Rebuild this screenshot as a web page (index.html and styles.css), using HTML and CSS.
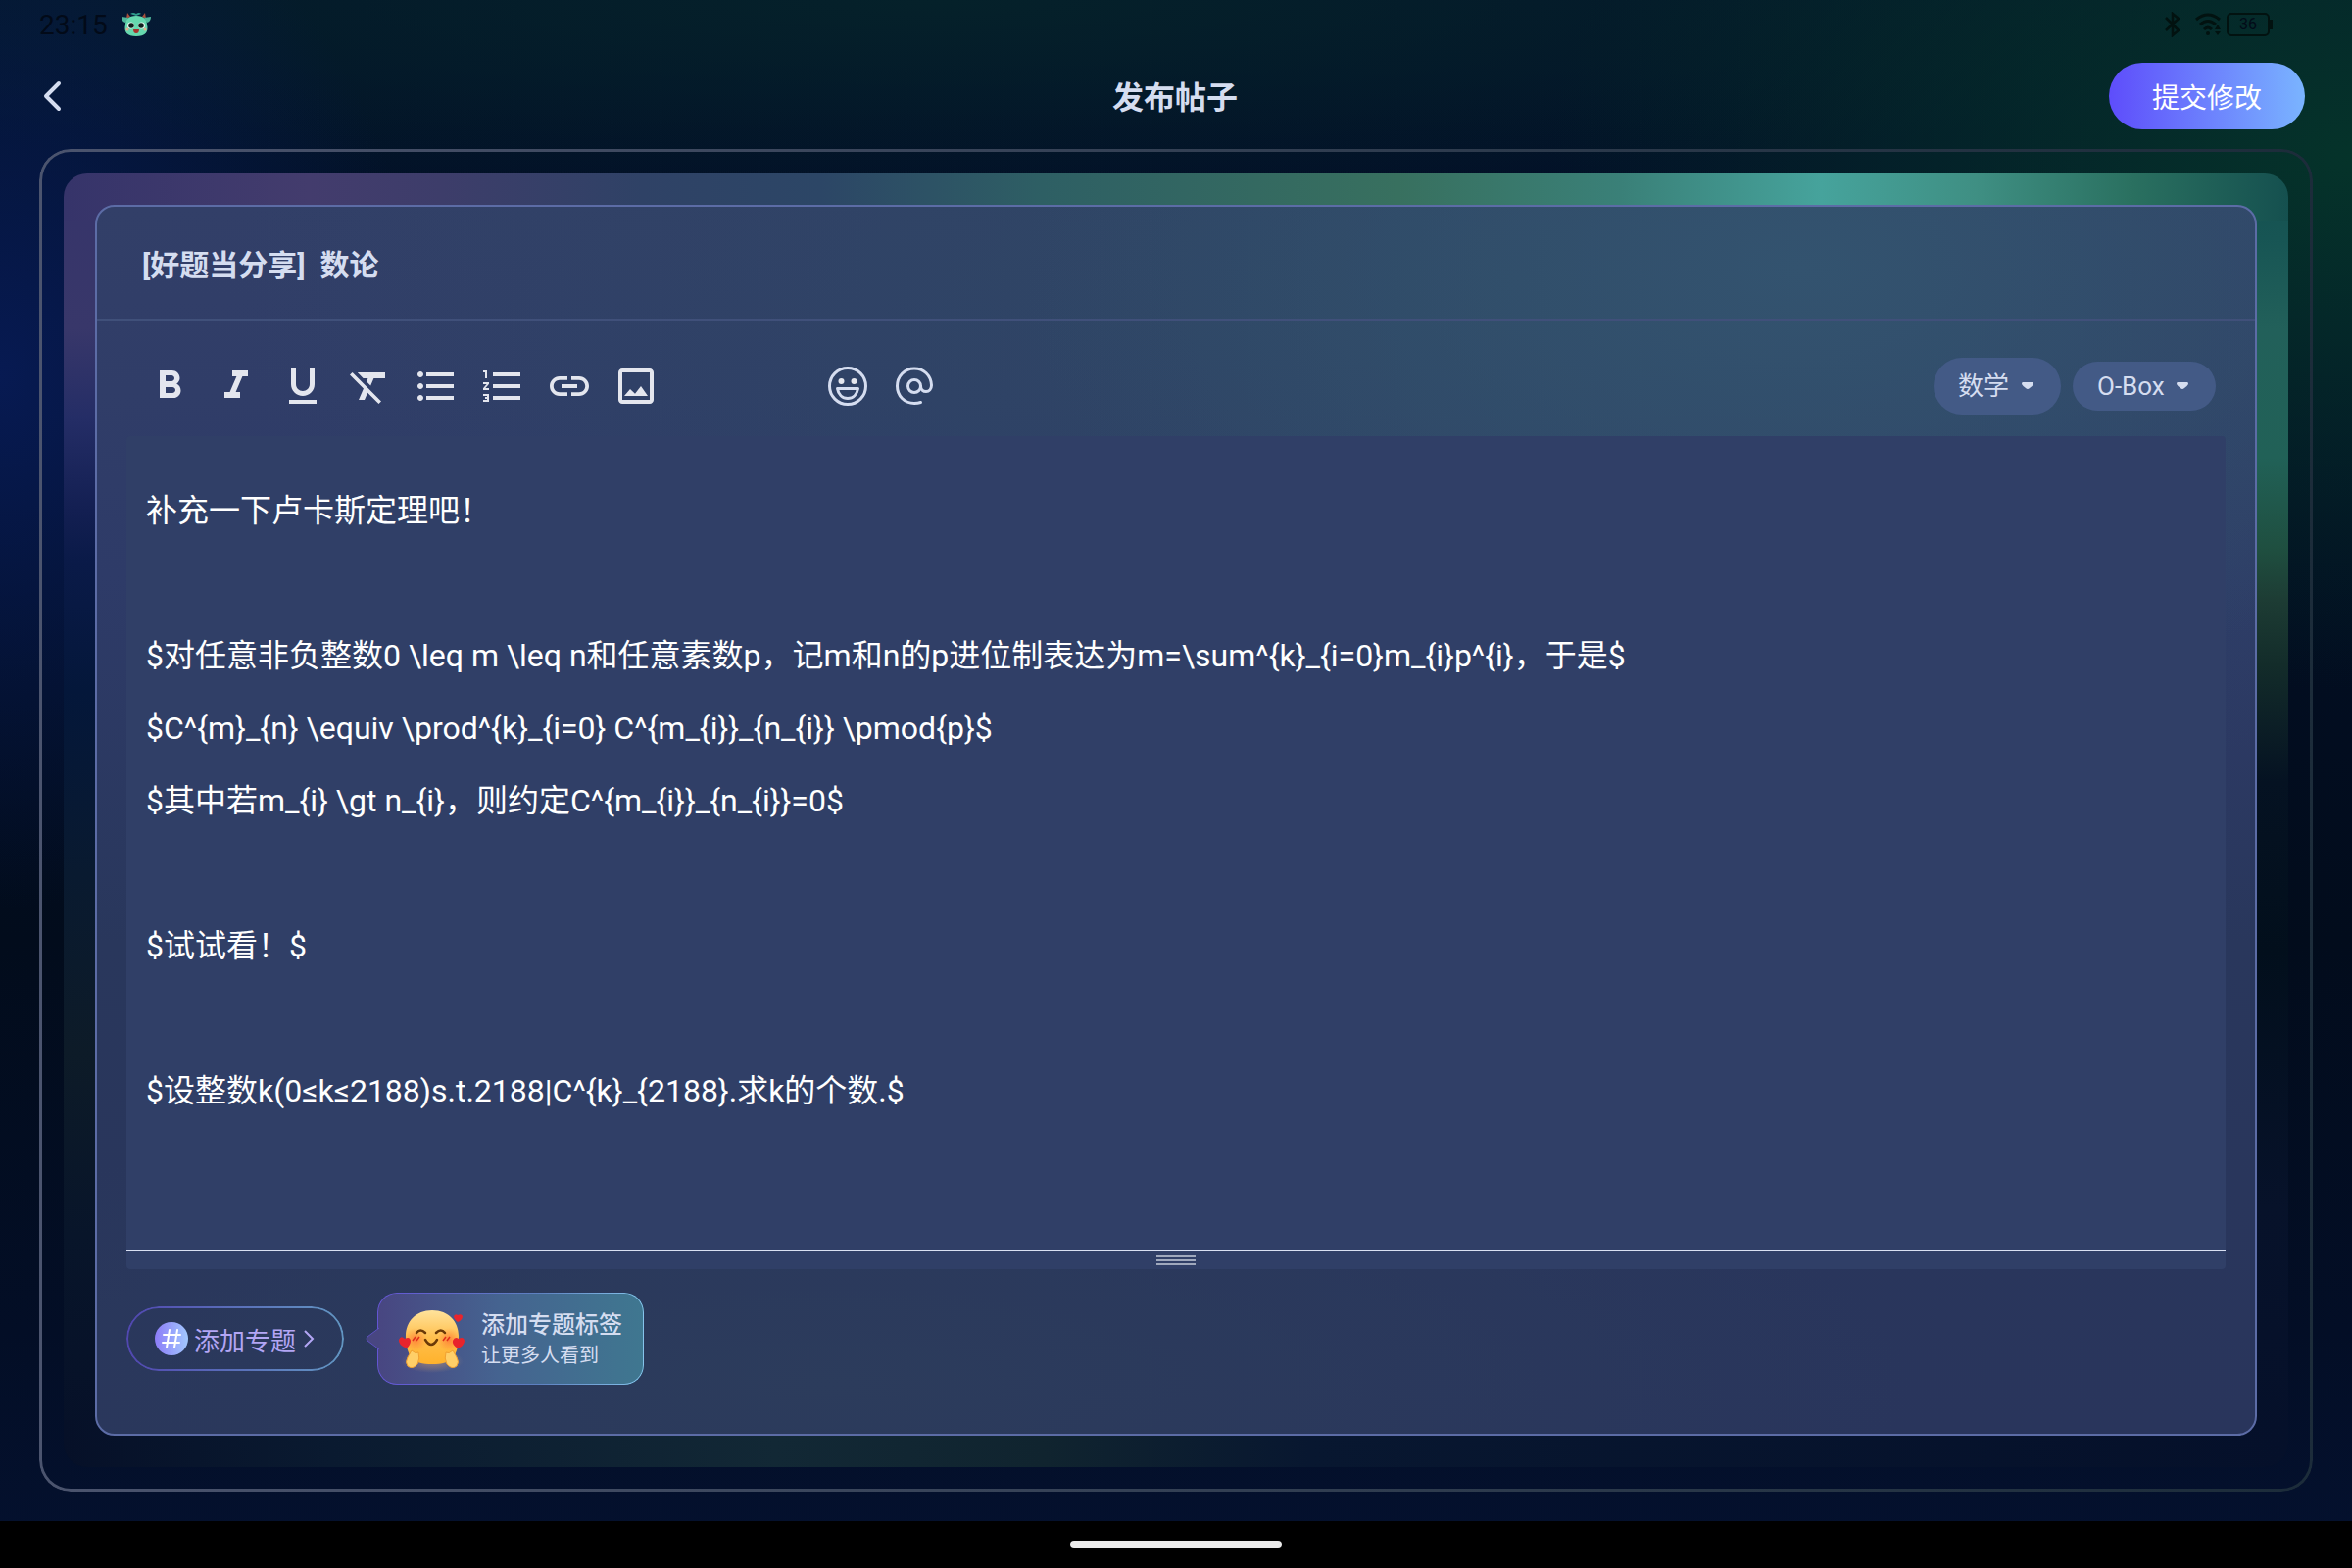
FILE: index.html
```html
<!DOCTYPE html>
<html lang="zh-CN">
  <head>
    <meta charset="UTF-8" />
    <meta name="viewport" content="width=device-width, initial-scale=1.0" />
    <title>发布帖子</title>
    <link rel="stylesheet" href="styles.css">
  </head>

  <body>
    <div class="status">
      <span class="time">23:15</span>
      <svg class="monster" width="30" height="26" viewBox="0 0 30 26">
        <path d="M9 2q3-2 6 0 3-2 5 0l-5 2z" fill="#2f9c8c" />
        <path d="M5 7l1-6 3 4zM25 7l-1-6-3 4z" fill="#a8503c" />
        <path d="M0 5l7 1-3 5q-4-1-4-6zM30 5l-7 1 3 5q4-1 4-6z" fill="#4fb79b" />
        <path d="M15 4c8 0 11 4 11 9 2 8-2 12-11 12S2 21 4 13c0-5 3-9 11-9z" fill="#66d8ae" />
        <circle cx="9.500" cy="14" r="3.500" fill="#e8f6f0" />
        <circle cx="20.500" cy="14" r="3.500" fill="#e8f6f0" />
        <circle cx="10" cy="14" r="2.800" fill="#10201c" />
        <circle cx="20" cy="14" r="2.800" fill="#10201c" />
        <circle cx="6" cy="18" r="1.500" fill="#e8b08c" />
        <circle cx="24" cy="18" r="1.500" fill="#e8b08c" />
        <path d="M12 18h6q0 4-3 4t-3-4z" fill="#a8322c" />
      </svg>
      <div class="system">
        <svg width="18" height="26" viewBox="0 0 18 26" fill="none" stroke="#021210" stroke-width="2.5">
          <path d="M2 6l13 13-6 5V2l6 5L2 19" />
        </svg>
        <svg width="28" height="26" viewBox="0 0 28 26" fill="none" stroke="#021210" stroke-width="3">
          <path d="M1 8q12-10 24 0M5 13q8-7 16 0M9 18q4-4 8 0" />
          <circle cx="13" cy="22" r="2" fill="#021210" stroke="none" />
          <path d="M20 18l3-5 3 5zM20 20l3 4 3-4z" fill="#021210" stroke="none" />
        </svg>
        <span class="battery">36</span>
      </div>
    </div>

    <header>
      <button class="back" aria-label="返回">
        <svg width="24" height="36" viewBox="0 0 24 36" fill="none" stroke="#d5ddf0" stroke-width="4" stroke-linecap="round" stroke-linejoin="round">
          <path d="M18 5L5 18l13 13" />
        </svg>
      </button>
      <h1>发布帖子</h1>
      <button class="submit">提交修改</button>
    </header>

    <main class="frame">
      <div class="glow">
        <section class="card">
          <input class="title" type="text" aria-label="标题" value="[好题当分享]&nbsp; 数论" />

          <div class="toolbar">
            <button aria-label="粗体">
              <svg viewBox="0 0 24 24"><path d="M15.6 10.79c.97-.67 1.65-1.77 1.65-2.79 0-2.26-1.75-4-4-4H7v14h7.04c2.09 0 3.71-1.7 3.71-3.79 0-1.52-.86-2.82-2.15-3.42zM10 6.5h3c.83 0 1.5.67 1.5 1.5s-.67 1.5-1.5 1.5h-3v-3zm3.5 9H10v-3h3.5c.83 0 1.5.67 1.5 1.5s-.67 1.5-1.5 1.5z" /></svg>
            </button>
            <button aria-label="斜体">
              <svg viewBox="0 0 24 24"><path d="M10 4v3h2.21l-3.42 8H6v3h8v-3h-2.21l3.42-8H18V4z" /></svg>
            </button>
            <button aria-label="下划线">
              <svg viewBox="0 0 24 24"><path d="M12 17c3.31 0 6-2.69 6-6V3h-2.5v8c0 1.93-1.57 3.5-3.5 3.5S8.500 12.930 8.500 11V3H6v8c0 3.310 2.690 6 6 6zm-7 2v2h14v-2H5z" /></svg>
            </button>
            <button aria-label="清除格式">
              <svg viewBox="0 0 24 24"><path d="M3.270 5L2 6.270l6.970 6.970L6.500 19h3l1.570-3.660L16.730 21 18 19.730 3.550 5.270 3.270 5zM6 5v.18L8.820 8h2.400l-.72 1.680 2.100 2.100L14.210 8H20V5H6z" /></svg>
            </button>
            <button aria-label="无序列表">
              <svg viewBox="0 0 24 24"><path d="M4 10.500c-.83 0-1.500.67-1.500 1.500s.67 1.500 1.500 1.500 1.500-.67 1.500-1.500-.67-1.500-1.500-1.500zm0-6c-.83 0-1.500.67-1.500 1.500S3.170 7.500 4 7.500 5.500 6.830 5.500 6 4.830 4.500 4 4.500zm0 12c-.83 0-1.500.68-1.500 1.500s.68 1.500 1.500 1.500 1.500-.68 1.500-1.500-.67-1.500-1.500-1.500zM7 19h14v-2H7v2zm0-6h14v-2H7v2zm0-8v2h14V5H7z" /></svg>
            </button>
            <button aria-label="有序列表">
              <svg viewBox="0 0 24 24"><path d="M2 17h2v.5H3v1h1v.5H2v1h3v-4H2v1zm1-9h1V4H2v1h1v3zm-1 3h1.800L2 13.100v.9h3v-1H3.200L5 10.900V10H2v1zm5-6v2h14V5H7zm0 14h14v-2H7v2zm0-6h14v-2H7v2z" /></svg>
            </button>
            <button aria-label="链接">
              <svg viewBox="0 0 24 24"><path d="M3.900 12c0-1.710 1.390-3.100 3.100-3.100h4V7H7c-2.760 0-5 2.240-5 5s2.240 5 5 5h4v-1.900H7c-1.710 0-3.100-1.390-3.100-3.100zM8 13h8v-2H8v2zm9-6h-4v1.900h4c1.710 0 3.100 1.390 3.100 3.100s-1.390 3.100-3.100 3.100h-4V17h4c2.760 0 5-2.240 5-5s-2.240-5-5-5z" /></svg>
            </button>
            <button aria-label="图片">
              <svg viewBox="0 0 24 24"><path d="M19 5v14H5V5h14m0-2H5c-1.100 0-2 .9-2 2v14c0 1.100.9 2 2 2h14c1.100 0 2-.9 2-2V5c0-1.100-.9-2-2-2zm-4.500 9l-3 3.900L9 13.500 6 17h12z" /></svg>
            </button>
            <button class="emoji" aria-label="表情">
              <svg viewBox="0 0 48 48">
                <g fill="none" stroke="#d5ddf0" stroke-width="3" stroke-linejoin="round">
                  <circle cx="24" cy="24" r="18.500" />
                  <path d="M13.500 26.500h21c-1 6-5 10-10.500 10s-9.500-4-10.500-10z" />
                </g>
                <circle cx="17.500" cy="19" r="3" />
                <circle cx="30.500" cy="19" r="3" />
              </svg>
            </button>
            <button aria-label="提及">
              <svg viewBox="0 0 48 48">
                <g fill="none" stroke="#d5ddf0" stroke-width="3" stroke-linecap="round">
                  <circle cx="24" cy="24" r="6.500" />
                  <path d="M30.500 24c0 3.500 2.500 5.500 5.500 5.500s5.500-2.500 5.500-6.500c-.5-10-8-17-17.500-17C14 6 6.500 14 6.500 24S14 41.500 24 41.500c2.500 0 4.500-.3 6.500-1" />
                </g>
              </svg>
            </button>

            <label class="pill">
              <select aria-label="学科"><option>数学</option></select>
              <svg width="12" height="8" viewBox="0 0 12 8"><path d="M1 0h10q1 0 1 2-1 2-4 4-2 2-4 0-3-2-4-4 0-2 1-2z" /></svg>
            </label>
            <label class="pill small">
              <select aria-label="板块"><option>O-Box</option></select>
              <svg width="12" height="8" viewBox="0 0 12 8"><path d="M1 0h10q1 0 1 2-1 2-4 4-2 2-4 0-3-2-4-4 0-2 1-2z" /></svg>
            </label>
          </div>

          <div class="editor">
            <textarea aria-label="正文" spellcheck="false">补充一下卢卡斯定理吧！

$对任意非负整数0 \leq m \leq n和任意素数p，记m和n的p进位制表达为m=\sum^{k}_{i=0}m_{i}p^{i}，于是$
$C^{m}_{n} \equiv \prod^{k}_{i=0} C^{m_{i}}_{n_{i}} \pmod{p}$
$其中若m_{i} \gt n_{i}，则约定C^{m_{i}}_{n_{i}}=0$

$试试看！$

$设整数k(0≤k≤2188)s.t.2188|C^{k}_{2188}.求k的个数.$</textarea>
            <div class="resize"><span></span></div>
          </div>

          <footer>
            <button class="topic ring">
              <svg width="34" height="34" viewBox="0 0 34 34">
                <defs>
                  <linearGradient id="hash"><stop stop-color="#8c7cf8" /><stop offset="1" stop-color="#a2c8ff" /></linearGradient>
                </defs>
                <circle cx="17" cy="17" r="17" fill="url(#hash)" />
                <path d="M15 8l-3 18M23 8l-3 18M9 13h17M8 21h17" fill="none" stroke="#fff" stroke-width="2" stroke-linecap="round" />
              </svg>
              <span>添加专题</span>
              <svg width="16" height="20" viewBox="0 0 16 20" fill="none" stroke="#b3a6f5" stroke-width="2"><path d="M3 2l8 8-8 8" /></svg>
            </button>

            <div class="bubble ring">
              <svg class="tail" width="15" height="24" viewBox="0 0 15 24">
                <path d="M15 1L3 10q-2 2 0 4l12 9" fill="#484681" stroke="#5d50c0" />
              </svg>
              <svg width="70" height="70" viewBox="0 0 70 70">
                <defs>
                  <linearGradient id="face" x2="0" y2="1"><stop stop-color="#ffe39c" /><stop offset=".5" stop-color="#ffc04e" /><stop offset="1" stop-color="#ffb22c" /></linearGradient>
                  <radialGradient id="halo"><stop stop-color="#f0b070" stop-opacity=".5" /><stop offset="1" stop-color="#f0b070" stop-opacity="0" /></radialGradient>
                  <radialGradient id="cheek"><stop stop-color="#ff5a30" stop-opacity=".6" /><stop offset="1" stop-color="#ff7a30" stop-opacity="0" /></radialGradient>
                </defs>
                <ellipse cx="35" cy="58" rx="32" ry="12" fill="url(#halo)" />
                <path d="M35 6c17 0 27 12 27 26 0 10-2 17-6 23-5 8-37 8-42 0-4-6-6-13-6-23C8 18 18 6 35 6z" fill="url(#face)" />
                <circle cx="18" cy="36" r="12" fill="url(#cheek)" />
                <circle cx="52" cy="36" r="12" fill="url(#cheek)" />
                <path d="M19 29q4-5 9 0M39 29q5-5 9 0M28 36q6 10 12 0" fill="none" stroke="#6b3a08" stroke-width="2.500" stroke-linecap="round" />
                <path d="M15 37l3-4M19 37l3-4M46 37l3-4M50 37l3-4" stroke="#e0301c" stroke-width="1.500" />
                <path d="M14 47q4 4 7 2 2 6-1 12-5 6-10 2-3-4 0-9zM56 47q-4 4-7 2-2 6 1 12 5 6 10 2 3-4 0-9z" fill="#ffcf68" stroke="#f0a030" />
                <path d="M9 45q-9-4-8-9 2-5 6-1 5-3 6 2 0 4-4 8zM61 45q-6-4-5-8 2-5 6-2 5-3 6 2 0 5-7 8zM61 18q-4-3-4-6 2-3 4-1 4-2 5 1 0 4-5 6z" fill="#e8242c" />
              </svg>
              <div class="tip">
                <strong>添加专题标签</strong>
                <span>让更多人看到</span>
              </div>
            </div>
          </footer>
        </section>
      </div>
    </main>

    <div class="home"><span></span></div>
  </body>
</html>
```

FILE: styles.css
```css
* {
  box-sizing: border-box;
}
body {
  margin: 0;
  min-height: 100vh;
  display: flex;
  flex-direction: column;
  font-family: Roboto, "Noto Sans CJK SC", sans-serif;
  color: #d5ddf0;
  background:
    radial-gradient(ellipse 18% 34% at 0 24%, #071a52, transparent),
    radial-gradient(ellipse 34% 34% at 100% 10%, #05332a, transparent),
    radial-gradient(ellipse 60% 12% at 40% 0, #05212a, transparent),
    linear-gradient(#03152a, #020f26 20%, #020c1c 60%, #030e26 85%, #04112f);
}
button,
input,
select,
textarea {
  font-family: inherit;
  color: inherit;
  background: none;
  border: 0;
  padding: 0;
  outline: none;
}
button {
  cursor: pointer;
}

/* statusbar */
.status {
  height: 48px;
  padding: 2px 84px 0 40px;
  display: flex;
  align-items: center;
  gap: 14px;
  color: #020a18;
}
.time {
  font-size: 28px;
}
.system {
  margin-left: auto;
  display: flex;
  align-items: center;
  gap: 4px;
}
.system svg:first-child {
  margin-right: 10px;
}
.battery {
  position: relative;
  width: 44px;
  height: 24px;
  border: 2px solid #021210;
  border-radius: 5px;
  font-size: 16px;
  line-height: 20px;
  text-align: center;
}
.battery::after {
  content: "";
  position: absolute;
  top: 5px;
  right: -5px;
  width: 3px;
  height: 10px;
  background: #021210;
}

header {
  height: 100px;
  padding: 0 48px 0 42px;
  display: grid;
  grid-template-columns: 1fr auto 1fr;
  align-items: center;
  margin-bottom: 4px;
}
.back {
  justify-self: start;
  height: 36px;
}
header h1 {
  margin: 0 -4px 2px 0;
  font-size: 32px;
  font-weight: 700;
}
.submit {
  justify-self: end;
  width: 200px;
  height: 68px;
  border-radius: 34px;
  background: linear-gradient(to right, #5e4dfb, #7ab4ff);
  color: #fff;
  font-size: 28px;
}

/* gradient outline, drawn as a masked layer */
.ring {
  position: relative;
}
.frame::before,
.ring::before {
  content: "";
  position: absolute;
  inset: 0;
  padding: 2px;
  border-radius: inherit;
  background: linear-gradient(to right, #5147b0, #6296c2);
  mask: linear-gradient(#000 0 0) content-box exclude, linear-gradient(#000 0 0);
  pointer-events: none;
}
.frame {
  position: relative;
  flex: 1;
  display: flex;
  margin: 0 40px 30px;
  padding: 25px;
  border-radius: 32px;
}
.frame::before {
  padding: 3px;
  background: linear-gradient(to right, #4b546e, #1c2c3a);
}

/* only the edges show round the card, each one has its own light */
.glow {
  flex: 1;
  display: flex;
  padding: 32px;
  border-radius: 24px;
  background:
    linear-gradient(to right, #36346a, #433c6d 11%, #3d3d6a 17%, #2f4266 26%, #2c4666 34%, #2e5f64 44%, #38705f 60%, #3a8078 70%, #46a39c 79%, #3f8f83 86%, #2a7060 93%, #15504f) top / 100% 48px no-repeat,
    linear-gradient(to right, #061028, #0a1a30 12%, #122835 32%, #10242f 44%, #081730 56%, #05102a) bottom / 100% 48px no-repeat,
    linear-gradient(#36346a, #38376a 12%, #242d66 19%, #131f52 26%, #0a1a48 30%, #04173a 40%, #091a30 54%, #0d1b28 68%, #08152a 82%, #061028) left / 48px 100% no-repeat,
    linear-gradient(#15504f, #175554 5%, #22605a 12%, #216157 22%, #1f4f40 29%, #1d3c34 33%, #132c2a 38%, #051222 47%, #020f1c 60%, #07122a 80%, #05102a) right / 48px 100% no-repeat;
}
.card {
  flex: 1;
  display: flex;
  flex-direction: column;
  border: 2px solid #5c6ca6;
  border-radius: 20px;
  background:
    radial-gradient(ellipse 36% 36% at 79% 5%, #33536f, transparent),
    radial-gradient(ellipse 60% 46% at 66% 6%, #2e4864, transparent),
    radial-gradient(ellipse 50% 24% at 34% 96%, #2c3c5c, transparent),
    linear-gradient(#323f68, #2e3b68 30%, #29375c 60%, #29355c);
}

.title {
  height: 117px;
  padding: 0 46px 2px;
  border-bottom: 2px solid #40507a;
  font-size: 30px;
  font-weight: 700;
}

.toolbar {
  height: 117px;
  padding: 14px 40px 0;
  display: flex;
  align-items: center;
}
.toolbar button {
  width: 68px;
  height: 48px;
}
.toolbar button svg {
  width: 48px;
  height: 48px;
  fill: #e4e6ee;
}
.toolbar .emoji {
  margin-left: 148px;
}
.pill {
  height: 58px;
  padding: 0 28px 0 25px;
  margin-left: auto;
  display: flex;
  align-items: center;
  gap: 12px;
  border-radius: 29px;
  background: #435a86;
}
.pill.small {
  height: 50px;
  margin-left: 12px;
}
.pill select {
  appearance: none;
  font-size: 26px;
}
.pill svg {
  fill: #d5ddf0;
}

.editor {
  flex: 1;
  display: flex;
  flex-direction: column;
  margin: 0 30px;
  border-radius: 4px;
  background: #303f67;
}
.editor textarea {
  flex: 1;
  padding: 39px 20px 0;
  resize: none;
  border-bottom: 2px solid #d9e0f2;
  color: #fff;
  font-size: 32px;
  line-height: 74px;
}
.resize {
  height: 18px;
  display: flex;
  justify-content: center;
  padding-top: 4px;
}
.resize span {
  width: 40px;
  height: 10px;
  background: repeating-linear-gradient(#a0a9bd 0 2px, transparent 2px 4px);
}

footer {
  height: 168px;
  padding: 24px 30px 0;
  display: flex;
  align-items: flex-start;
  gap: 34px;
}
.topic {
  width: 222px;
  height: 66px;
  padding-left: 2px;
  margin-top: 14px;
  border-radius: 33px;
  display: flex;
  justify-content: center;
  align-items: center;
  gap: 6px;
  color: #b3a6f5;
  font-size: 26px;
}
.bubble {
  height: 94px;
  padding: 0 22px 0 21px;
  border-radius: 20px;
  display: flex;
  align-items: center;
  gap: 15px;
  background: linear-gradient(to right, #484681, #456390 45%, #3f7790);
}
.bubble::before {
  padding: 1px;
  background: linear-gradient(to right, #6355d4, #5d80c0 60%, #86c4ec);
}
.tail {
  position: absolute;
  left: -13px;
  top: 35px;
}
.tip {
  display: flex;
  flex-direction: column;
}
.tip strong {
  font-size: 24px;
  font-weight: 500;
  line-height: 34px;
}
.tip span {
  font-size: 20px;
  line-height: 28px;
}

.home {
  height: 48px;
  background: #000;
  display: flex;
  justify-content: center;
  align-items: center;
}
.home span {
  width: 216px;
  height: 8px;
  border-radius: 4px;
  background: #ebebeb;
}
```
